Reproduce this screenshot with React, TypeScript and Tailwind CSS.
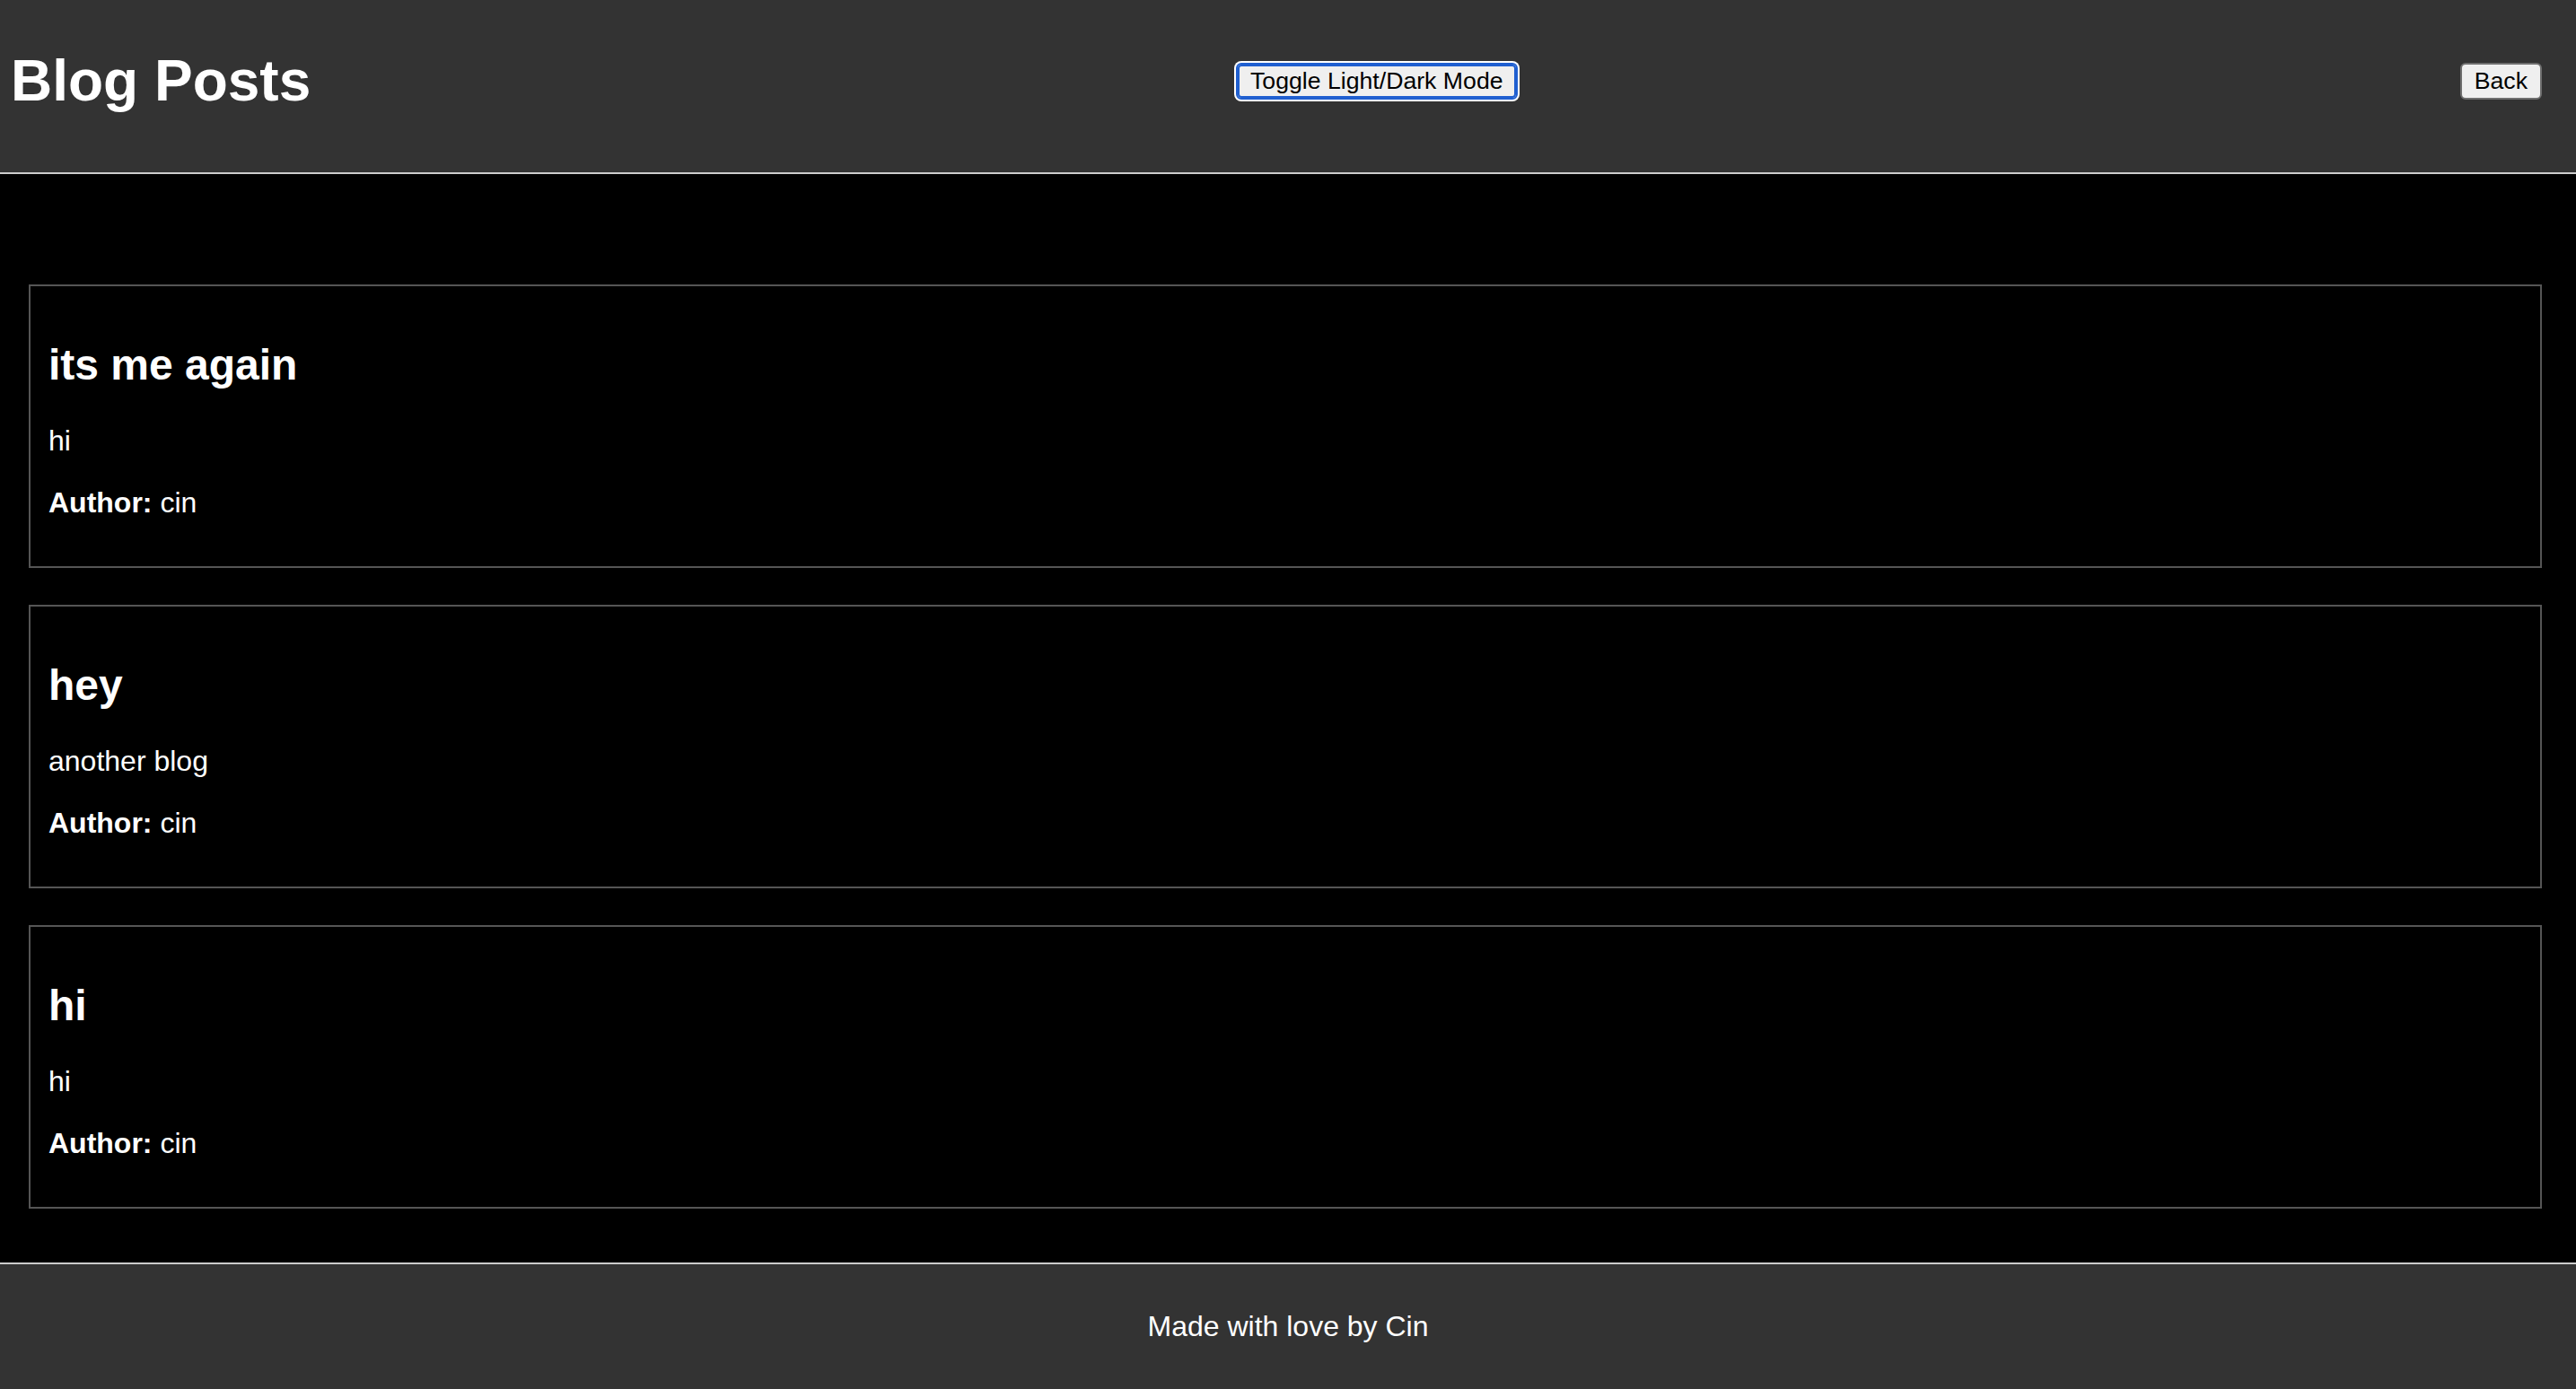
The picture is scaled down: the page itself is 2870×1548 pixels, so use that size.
import React from "react";

const posts = [
  { title: "its me again", body: "hi", author: "cin" },
  { title: "hey", body: "another blog", author: "cin" },
  { title: "hi", body: "hi", author: "cin" },
];

export default function App() {
  return (
    <div className="w-full bg-black text-white font-['Liberation_Sans',Arial,sans-serif]">
      <header className="flex h-[194px] items-center border-b-2 border-[#cccccc] bg-[#333333] pb-[12px] pl-[12px] pr-[38px]">
        <h1 className="m-0 w-[1365px] shrink-0 text-[64px] font-bold leading-[74px]">Blog Posts</h1>
        <button className="flex h-[41px] items-center rounded-[6px] border-2 border-[#1f5fd0] bg-[#efefef] px-[14px] text-[26.67px] leading-[31px] text-black shadow-[inset_0_0_0_2px_#1f5fd0,0_0_0_2px_#ffffff]">
          Toggle Light/Dark Mode
        </button>
        <button className="ml-auto flex h-[41px] items-center rounded-[6px] border-2 border-[#6e6e6e] bg-[#efefef] px-[14px] text-[26.67px] leading-[31px] text-black">
          Back
        </button>
      </header>

      <main className="flex flex-col gap-[41px] pb-[60px] pl-[32px] pr-[38px] pt-[123px]">
        {posts.map((p, i) => (
          <div
            key={i}
            className="flex flex-col border-2 border-[#555555] px-[20px] pb-[52px] pt-[60px]"
          >
            <h2 className="m-0 text-[48px] font-bold leading-[55px]">{p.title}</h2>
            <p className="mt-[39px] text-[32px] leading-[37px]">{p.body}</p>
            <p className="mt-[32px] text-[32px] leading-[37px]">
              <span className="font-bold">Author:</span> {p.author}
            </p>
          </div>
        ))}
      </main>

      <footer className="border-t-2 border-[#cccccc] bg-[#333333] pb-[51px] pt-[51px] text-center">
        <p className="text-[32px] leading-[37px]">Made with love by Cin</p>
      </footer>
    </div>
  );
}
